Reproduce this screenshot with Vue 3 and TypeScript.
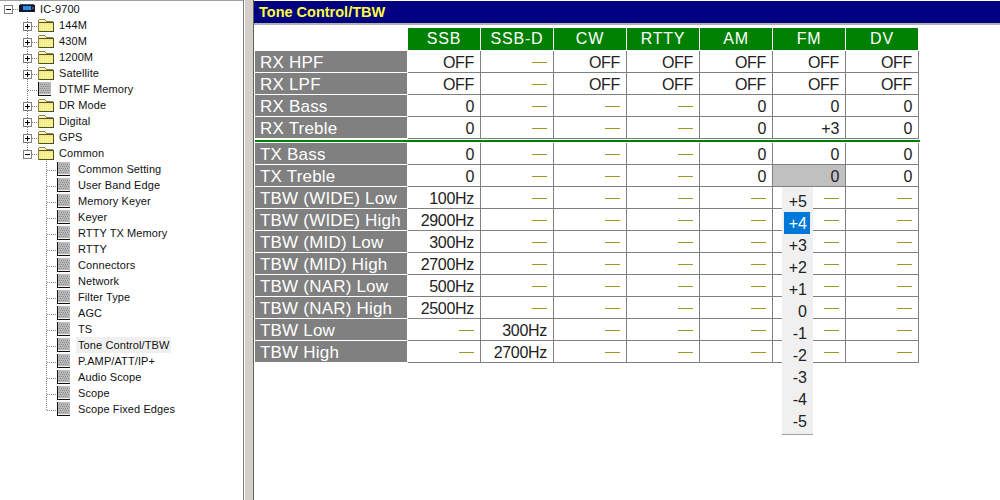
<script setup lang="ts">
interface TreeItem { label: string; kind: 'folder' | 'book'; box?: 'plus' | 'minus'; depth: number; selected?: boolean }

const tree: TreeItem[] = [
  { label: '144M', kind: 'folder', box: 'plus', depth: 1 },
  { label: '430M', kind: 'folder', box: 'plus', depth: 1 },
  { label: '1200M', kind: 'folder', box: 'plus', depth: 1 },
  { label: 'Satellite', kind: 'folder', box: 'plus', depth: 1 },
  { label: 'DTMF Memory', kind: 'book', depth: 1 },
  { label: 'DR Mode', kind: 'folder', box: 'plus', depth: 1 },
  { label: 'Digital', kind: 'folder', box: 'plus', depth: 1 },
  { label: 'GPS', kind: 'folder', box: 'plus', depth: 1 },
  { label: 'Common', kind: 'folder', box: 'minus', depth: 1 },
  ...['Common Setting', 'User Band Edge', 'Memory Keyer', 'Keyer', 'RTTY TX Memory', 'RTTY', 'Connectors', 'Network', 'Filter Type', 'AGC', 'TS', 'Tone Control/TBW', 'P.AMP/ATT/IP+', 'Audio Scope', 'Scope', 'Scope Fixed Edges'].map(
    (label): TreeItem => ({ label, kind: 'book', depth: 2, selected: label === 'Tone Control/TBW' })
  ),
]

const columns = ['SSB', 'SSB-D', 'CW', 'RTTY', 'AM', 'FM', 'DV']
const D = '—'
const rxRows = [
  { label: 'RX HPF', cells: ['OFF', D, 'OFF', 'OFF', 'OFF', 'OFF', 'OFF'] },
  { label: 'RX LPF', cells: ['OFF', D, 'OFF', 'OFF', 'OFF', 'OFF', 'OFF'] },
  { label: 'RX Bass', cells: ['0', D, D, D, '0', '0', '0'] },
  { label: 'RX Treble', cells: ['0', D, D, D, '0', '+3', '0'] },
]
const txRows = [
  { label: 'TX Bass', cells: ['0', D, D, D, '0', '0', '0'] },
  { label: 'TX Treble', cells: ['0', D, D, D, '0', '0', '0'] },
  { label: 'TBW (WIDE) Low', cells: ['100Hz', D, D, D, D, D, D] },
  { label: 'TBW (WIDE) High', cells: ['2900Hz', D, D, D, D, D, D] },
  { label: 'TBW (MID) Low', cells: ['300Hz', D, D, D, D, D, D] },
  { label: 'TBW (MID) High', cells: ['2700Hz', D, D, D, D, D, D] },
  { label: 'TBW (NAR) Low', cells: ['500Hz', D, D, D, D, D, D] },
  { label: 'TBW (NAR) High', cells: ['2500Hz', D, D, D, D, D, D] },
  { label: 'TBW Low', cells: [D, '300Hz', D, D, D, D, D] },
  { label: 'TBW High', cells: [D, '2700Hz', D, D, D, D, D] },
]
const options = ['+5', '+4', '+3', '+2', '+1', '0', '-1', '-2', '-3', '-4', '-5']
</script>

<template>
  <div class="app">
    <aside class="tree">
      <div class="row">
        <svg class="gutter" width="19" height="16" shape-rendering="crispEdges">
          <path d="M13 8.500h6" class="dots" />
          <rect x="4.500" y="4.500" width="8" height="8" fill="#fff" stroke="#808080" />
          <path d="M6 8.500h5" stroke="#000" />
        </svg>
        <svg class="icon-radio" width="21" height="16" shape-rendering="crispEdges">
          <rect x="0" y="4" width="16" height="7" fill="#14182a" />
          <rect x="1" y="3" width="14" height="1" fill="#4a4f5e" />
          <rect x="4" y="5" width="8" height="4" fill="#2a8fe6" />
          <rect x="13" y="6" width="2" height="2" fill="#555" />
        </svg>
        <span class="label">IC-9700</span>
      </div>
      <div v-for="(item, i) in tree" :key="item.label" class="row">
        <svg class="gutter" :width="item.depth === 2 ? 57 : 38" height="16" shape-rendering="crispEdges">
          <template v-if="item.depth === 1">
            <path :d="item.label === 'Common' ? 'M27.500 0v5M32 9.500h6' : 'M27.500 0v16M28 9.500h10'" class="dots" />
            <template v-if="item.box">
              <rect x="23.500" y="5.500" width="8" height="8" fill="#fff" stroke="#808080" />
              <path d="M25 9.500h5" stroke="#000" />
              <path v-if="item.box === 'plus'" d="M27.500 7v5" stroke="#000" />
            </template>
          </template>
          <template v-else>
            <path :d="i === tree.length - 1 ? 'M46.500 0v9M47 9.500h10' : 'M46.500 0v16M47 9.500h10'" class="dots" />
          </template>
        </svg>
        <svg v-if="item.kind === 'folder'" class="icon-folder" width="21" height="16" shape-rendering="crispEdges">
          <path d="M0.500 5.500V3.500l1-1h5l2 2h6v10h-14z" fill="#fff7b0" stroke="#8a8450" />
          <rect x="1" y="6" width="14" height="8" fill="#f3ea80" />
          <path d="M1 5.500h14M15.500 5v10M1 14.500h15" stroke="#55502a" fill="none" />
          <path d="M3 8.500h11M3 10.500h11M3 12.500h11" stroke="#fffbd0" stroke-dasharray="1 1" />
        </svg>
        <svg v-else class="icon-book" width="21" height="16" shape-rendering="crispEdges">
          <rect x="0" y="1" width="13" height="14" fill="#111" />
          <rect x="1" y="1" width="12" height="12" fill="#b8b8b8" />
          <path d="M2 3.500h10M3 5.500h9M2 7.500h10M3 9.500h9M2 11.500h10" stroke="#8a8a8a" stroke-dasharray="1 1" />
          <rect x="1" y="13" width="12" height="1" fill="#eee" />
        </svg>
        <span class="label" :class="{ selected: item.selected }">{{ item.label }}</span>
      </div>
    </aside>

    <div class="splitter" />

    <main class="pane">
      <header class="title">Tone Control/TBW</header>
      <section class="grid-wrap">
        <div class="table">
          <div class="tr head">
            <div class="th blank" />
            <div v-for="c in columns" :key="c" class="th">{{ c }}</div>
          </div>
          <div v-for="r in rxRows" :key="r.label" class="tr">
            <div class="name">{{ r.label }}</div>
            <div v-for="(v, ci) in r.cells" :key="ci" class="td">
              <span v-if="v === D" class="dash" />
              <template v-else>{{ v }}</template>
            </div>
          </div>
          <div class="divider" />
          <div v-for="r in txRows" :key="r.label" class="tr">
            <div class="name">{{ r.label }}</div>
            <div
              v-for="(v, ci) in r.cells"
              :key="ci"
              class="td"
              :class="{ active: r.label === 'TX Treble' && ci === 5 }"
            >
              <span v-if="v === D" class="dash" />
              <template v-else>{{ v }}</template>
            </div>
          </div>
          <ul class="menu">
            <li v-for="o in options" :key="o" :class="{ hot: o === '+4' }">{{ o }}</li>
          </ul>
        </div>
      </section>
    </main>
  </div>
</template>

<style>
html, body { margin: 0; background: #fff; }
</style>

<style scoped>
.app {
  display: flex;
  width: 1000px;
  height: 500px;
  overflow: hidden;
  background: #fff;
  font-family: "Liberation Sans", Arial, sans-serif;
  color: #000;
}
.tree {
  width: 243px;
  box-sizing: border-box;
  border-top: 1px solid #a0a0a0;
  flex: none;
}
.row { display: flex; height: 16px; align-items: flex-start; }
.gutter, .icon-radio, .icon-folder, .icon-book { flex: none; display: block; }
.dots { stroke: #808080; stroke-dasharray: 1 1; fill: none; }
.label {
  font-size: 11px;
  line-height: 16px;
  height: 16px;
  letter-spacing: 0.1px;
  color: #111;
  white-space: nowrap;
  padding: 0 2px;
  margin-left: -2px;
}
.label.selected { background: #f0f0f0; }
.splitter {
  width: 11px;
  flex: none;
  box-sizing: border-box;
  border-left: 1px solid #808080;
  border-right: 1px solid #606060;
  background: linear-gradient(to right, #fff 0 1px, #d4d0c8 1px);
}
.pane { flex: 1; display: flex; flex-direction: column; min-width: 0; }
.title {
  height: 22px;
  margin-top: 1px;
  background: #000080;
  color: #ffff40;
  font-size: 14.500px;
  font-weight: 700;
  line-height: 22px;
  padding-left: 5px;
  flex: none;
}
.grid-wrap { padding: 3px 0 0 1px; border-top: 2px solid #b0b0b0; flex: 1; }
.table { position: relative; width: 664px; }
.tr { display: flex; height: 22px; }
.tr.head { height: 23px; }
.th {
  width: 72px;
  height: 22px;
  margin-right: 1px;
  background: #008000;
  color: #fff;
  font-size: 16px;
  line-height: 22px;
  text-align: center;
  letter-spacing: 0.8px;
}
.th.blank { width: 152px; background: none; }
.name {
  width: 152px;
  height: 21px;
  margin-right: 1px;
  background: #808080;
  color: #fff;
  font-size: 17px;
  letter-spacing: 0.2px;
  line-height: 24px;
  padding-left: 5px;
  box-sizing: border-box;
  white-space: nowrap;
  overflow: hidden;
  flex: none;
}
.td {
  width: 73px;
  height: 22px;
  box-sizing: border-box;
  border-right: 1px solid #808080;
  border-bottom: 1px solid #808080;
  display: flex;
  align-items: center;
  justify-content: flex-end;
  padding: 3px 6px 0 0;
  font-size: 16px;
  letter-spacing: -0.3px;
  color: #222;
  flex: none;
}
.td.active { background: #c0c0c0; }
.dash { display: block; width: 15px; height: 1px; background: #a09820; align-self: flex-start; margin-top: 8px; }
.divider { height: 2px; background: #008000; margin: 1px 0; width: 665px; }
.menu {
  position: absolute;
  left: 527px;
  top: 159px;
  width: 31px;
  height: 248px;
  margin: 0;
  padding: 3px 3px 3px 2px;
  box-sizing: border-box;
  list-style: none;
  background: #f0f0f0;
  border-bottom: 1px solid #a0a0a0;
  font-size: 16px;
}
.menu li { height: 22px; line-height: 24px; text-align: right; padding-right: 3px; color: #222; }
.menu li.hot { background: #0078d7; color: #fff; }
</style>
